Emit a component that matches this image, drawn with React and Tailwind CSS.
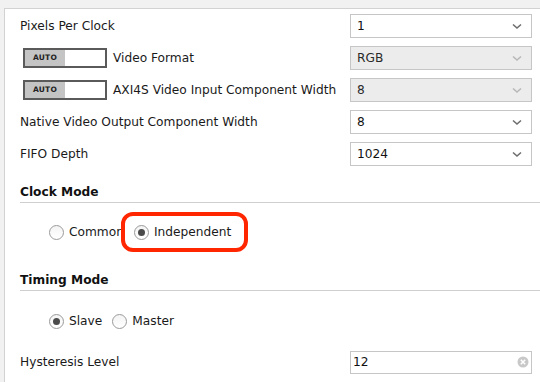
import React from "react";

const font = { fontFamily: '"DejaVu Sans", "Liberation Sans", sans-serif' };

function Chevron({ disabled }) {
  return (
    <svg width="10" height="7" viewBox="0 0 10 7" className="shrink-0">
      <polyline
        points="1,1.5 5,5 9,1.5"
        fill="none"
        stroke={disabled ? "#b8b8b8" : "#6e6e6e"}
        strokeWidth="1.6"
      />
    </svg>
  );
}

function Select({ value, disabled }) {
  return (
    <div
      className={`w-[182px] h-[24px] border border-[#c6c6c6] flex items-center justify-between pl-[6px] pr-[9px] text-[12.2px] leading-[16px] ${
        disabled ? "bg-[#ececec] text-[#2a2a2a]" : "bg-white text-[#111]"
      }`}
    >
      <span>{value}</span>
      <Chevron disabled={disabled} />
    </div>
  );
}

function Auto() {
  return (
    <div className="w-[84px] h-[20px] border-2 border-[#5a5a5a] flex bg-white shrink-0">
      <div className="w-[40px] h-full bg-[#c4c4c4] flex items-center justify-center">
        <span className="text-[7.5px] font-bold text-[#222] leading-none tracking-[0.2px]">AUTO</span>
      </div>
    </div>
  );
}

function Row({ label, auto, children }) {
  return (
    <div className="h-[32px] flex items-center">
      <div className="w-[330px] flex items-center text-[12.2px] leading-[16px] text-[#1a1a1a]">
        {auto && (
          <div className="mr-[6px] ml-[3px]">
            <Auto />
          </div>
        )}
        <span>{label}</span>
      </div>
      {children}
    </div>
  );
}

function Radio({ checked, label }) {
  return (
    <div className="flex items-center">
      <div className="w-[15px] h-[15px] rounded-full border border-[#9a9a9a] bg-gradient-to-b from-[#f4f4f4] to-white flex items-center justify-center">
        {checked && <div className="w-[7px] h-[7px] rounded-full bg-[#4a4a4a]" />}
      </div>
      <span className="ml-[5px] text-[12.2px] leading-[16px] text-[#1a1a1a]">{label}</span>
    </div>
  );
}

function Header({ children, className }) {
  return (
    <div className={`border-b border-[#cfcfcf] pb-[2px] text-[12.2px] leading-[16px] font-bold text-[#111] ${className}`}>
      {children}
    </div>
  );
}

export default function App() {
  return (
    <div className="w-[540px] h-[382px] overflow-hidden bg-[#f1f1f1] pt-[8px] pl-[4px]" style={font}>
      <div className="h-[400px] bg-white border-t border-l border-[#d2d2d2] pl-[15px] pt-[1px]">
        <Row label="Pixels Per Clock">
          <Select value="1" />
        </Row>
        <Row label="Video Format" auto>
          <Select value="RGB" disabled />
        </Row>
        <Row label="AXI4S Video Input Component Width" auto>
          <Select value="8" disabled />
        </Row>
        <Row label="Native Video Output Component Width">
          <Select value="8" />
        </Row>
        <Row label="FIFO Depth">
          <Select value="1024" />
        </Row>

        <Header className="mt-[14px]">Clock Mode</Header>
        <div className="relative h-[22px] mt-[18px] pl-[29px] flex items-center gap-[10px]">
          <Radio label="Common" />
          <Radio checked label="Independent" />
          <div className="absolute left-[101px] top-[-9px] w-[127px] h-[40px] border-4 border-[#ff2600] rounded-[12px]" />
        </div>

        <Header className="mt-[29px]">Timing Mode</Header>
        <div className="h-[22px] mt-[19px] pl-[29px] flex items-center gap-[10px]">
          <Radio checked label="Slave" />
          <Radio label="Master" />
        </div>

        <div className="h-[32px] mt-[14px] flex items-center">
          <div className="w-[330px] text-[12.2px] leading-[16px] text-[#1a1a1a]">Hysteresis Level</div>
          <div className="w-[182px] h-[23px] border border-[#c6c6c6] bg-white flex items-center justify-between pl-[2px] pr-[2px] text-[12.2px] leading-[16px] text-[#111]">
            <span>12</span>
            <svg width="12" height="12" viewBox="0 0 12 12">
              <circle cx="6" cy="6" r="5.5" fill="#c8c8c8" />
              <path d="M3.8 3.8 L8.2 8.2 M8.2 3.8 L3.8 8.2" stroke="#fff" strokeWidth="1.5" />
            </svg>
          </div>
        </div>
      </div>
    </div>
  );
}
